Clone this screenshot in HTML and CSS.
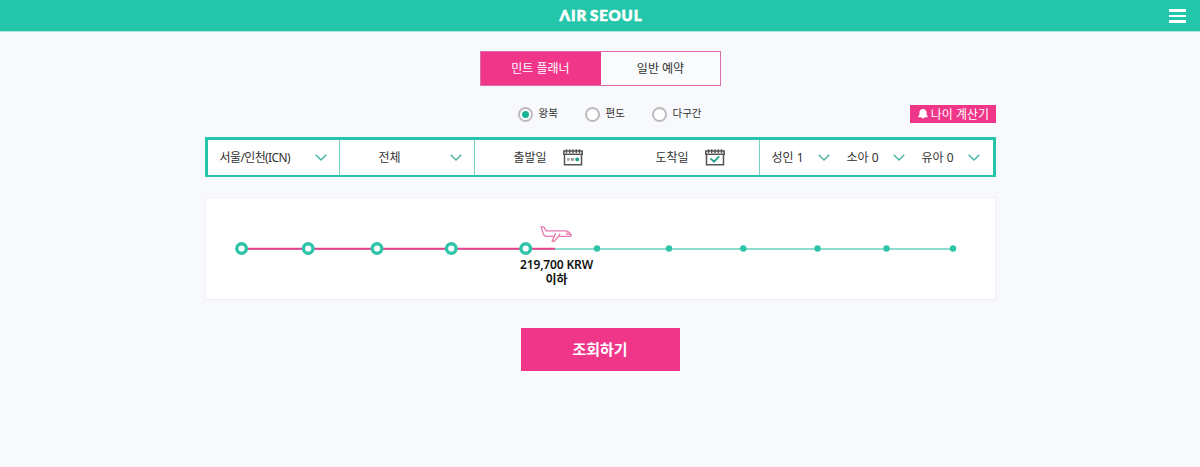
FILE: index.html
```html
<!DOCTYPE html>
<html lang="ko">
<head>
    <meta charset="UTF-8">
    <meta name="viewport" content="width=device-width, initial-scale=1.0">
    <title>AIR SEOUL</title>
    <link rel="stylesheet" href="styles.css">
</head>
<body>
    <header class="header">
        <h1 class="logo" aria-label="AIR SEOUL">ΛIR SEOUL</h1>
        <button type="button" class="menu-btn" aria-label="메뉴"><i></i><i></i><i></i></button>
    </header>

    <main class="container">
        <div class="tabs">
            <a class="tab active">민트 플래너</a>
            <a class="tab">일반 예약</a>
        </div>

        <div class="options">
            <div class="trip-type">
                <label class="radio checked"><i></i><span>왕복</span></label>
                <label class="radio"><i></i><span>편도</span></label>
                <label class="radio"><i></i><span>다구간</span></label>
            </div>
            <button type="button" class="age-btn">
                <svg width="10" height="10" viewBox="0 0 10 10"><path d="M5 0C3 0 1.4 1.5 1.4 3.4V5.6L.3 7.3V8.2H9.7V7.3L8.6 5.6V3.4C8.6 1.5 7 0 5 0ZM3.3 8.2Q5 11 6.7 8.2Z" fill="#fff"/></svg>
                <span>나이 계산기</span>
            </button>
        </div>

        <div class="search-bar">
            <div class="cell depart">
                <span>서울/인천(ICN)</span>
                <svg class="arrow" viewBox="0 0 12 7"><path d="M.7.7 6 6 11.3.7"/></svg>
            </div>
            <div class="cell arrive">
                <span>전체</span>
                <svg class="arrow" viewBox="0 0 12 7"><path d="M.7.7 6 6 11.3.7"/></svg>
            </div>
            <div class="cell dates">
                <div class="date">
                    <span>출발일</span>
                    <svg class="calendar" viewBox="0 0 20 17">
                        <path class="frame" d="M.8 2H19.2V5.3H.8ZM1.5 5.3V15.8H18.5V5.3"/>
                        <path class="rings" d="M3.5 .2V4M6.7 .2V4M10 .2V4M13.3 .2V4M16.5 .2V4"/>
                        <rect x="4" y="9" width="2.8" height="2.8" fill="#aaa"/>
                        <rect x="8" y="9" width="2.8" height="2.8" fill="#999"/>
                        <circle cx="14.2" cy="10.4" r="1.9" fill="#1f9f89"/>
                    </svg>
                </div>
                <div class="date">
                    <span>도착일</span>
                    <svg class="calendar" viewBox="0 0 20 17">
                        <path class="frame" d="M.8 2H19.2V5.3H.8ZM1.5 5.3V15.8H18.5V5.3"/>
                        <path class="rings" d="M3.5 .2V4M6.7 .2V4M10 .2V4M13.3 .2V4M16.5 .2V4"/>
                        <path d="M5.6 9.3 9 12.7 14.2 7.3" fill="none" stroke="#1f9f89" stroke-width="1.8"/>
                    </svg>
                </div>
            </div>
            <div class="cell people">
                <div class="person"><span>성인 1</span><svg class="arrow" viewBox="0 0 12 7"><path d="M.7.7 6 6 11.3.7"/></svg></div>
                <div class="person"><span>소아 0</span><svg class="arrow" viewBox="0 0 12 7"><path d="M.7.7 6 6 11.3.7"/></svg></div>
                <div class="person"><span>유아 0</span><svg class="arrow" viewBox="0 0 12 7"><path d="M.7.7 6 6 11.3.7"/></svg></div>
            </div>
        </div>

        <section class="planner">
            <svg class="track" viewBox="0 0 789 60">
                <path d="M36 51H748" stroke="#8fdccf" stroke-width="2"/>
                <path d="M36 50.7H349" stroke="#e9418c" stroke-width="2"/>
                <g fill="#fff" stroke="#2dc4a8" stroke-width="3.4">
                    <circle cx="35.6" cy="50.5" r="4.8"/>
                    <circle cx="102.2" cy="50.5" r="4.8"/>
                    <circle cx="171" cy="50.5" r="4.8"/>
                    <circle cx="245.3" cy="50.5" r="4.8"/>
                    <circle cx="319.7" cy="50.5" r="4.8"/>
                </g>
                <g fill="#2dc4a8">
                    <circle cx="391" cy="50.5" r="3.2"/>
                    <circle cx="463" cy="50.5" r="3.2"/>
                    <circle cx="537.3" cy="50.5" r="3.2"/>
                    <circle cx="611.6" cy="50.5" r="3.2"/>
                    <circle cx="680.5" cy="50.5" r="3.2"/>
                    <circle cx="747" cy="50.5" r="3.2"/>
                </g>
                <g class="plane" transform="translate(334 28)">
                    <path d="M1.2.8H3.8L6.2 4.9H26Q28.8 5.3 31.4 9.2Q31 10.3 29 10.3H18.6L14.2 15.4H12.2L14.2 10.3H6.5Q4 10 3.3 8Z"/>
                    <path d="M14.2 10.3 15.8 7.2M18.6 10.3 20 7.5M26.8 6.5V8.2H30.3"/>
                </g>
            </svg>
            <div class="price">
                <span>219,700 KRW</span>
                <span>이하</span>
            </div>
        </section>

        <button type="button" class="submit-btn">조회하기</button>
    </main>
</body>
</html>
```

FILE: styles.css
```css
:root {
    --mint: #24c6aa;
    --pink: #ef3689;
}
* {
    box-sizing: border-box;
}
body {
    margin: 0;
    min-height: 467px;
    background: #f8f9fc;
    color: #333;
    font-family: "Noto Sans", "Noto Sans CJK KR", sans-serif;
    font-size: 12px;
}
button {
    border: 0;
    padding: 0;
    font-family: inherit;
    cursor: pointer;
}
svg {
    display: block;
    flex: none;
}
span {
    white-space: nowrap;
}
.header {
    display: grid;
    grid-template-columns: 1fr auto 1fr;
    align-items: center;
    height: 32px;
    padding-right: 14px;
    background: var(--mint);
    border-bottom: 1px solid #a9e7dc;
}
.logo {
    grid-column: 2;
    margin: -1px 0 0 16px;
    color: #fff;
    font: 900 15px/30px Lato, sans-serif;
    letter-spacing: 0.9px;
    word-spacing: -1.5px;
    -webkit-text-stroke: 0.6px #fff;
}
.menu-btn {
    display: flex;
    flex-direction: column;
    justify-self: end;
    gap: 3px;
    width: 17px;
    margin-top: 1px;
    background: none;
}
.menu-btn i {
    height: 2.6px;
    background: #fff;
}
.container {
    width: 791px;
    margin: 0 auto;
}
.tabs {
    display: flex;
    width: 241px;
    height: 35px;
    margin: 19px auto 0;
    border: 1px solid #d86fa8;
    background: #fafbfd;
}
.tab {
    flex: 1;
    padding-left: 1px;
    line-height: 33px;
    text-align: center;
}
.tab.active {
    flex: 0 0 120px;
    padding-left: 0;
    background: var(--pink);
    color: #fff;
}
.options {
    display: flex;
    justify-content: space-between;
    align-items: center;
    height: 18px;
    margin-top: 19px;
    padding-left: 313px;
}
.trip-type {
    display: flex;
    font-size: 10.5px;
    line-height: 14px;
}
.radio {
    display: flex;
    align-items: center;
    gap: 6px;
    width: 67px;
}
.radio span {
    margin-top: -2px;
}
.radio i {
    display: flex;
    align-items: center;
    justify-content: center;
    width: 15px;
    height: 15px;
    border: 2px solid #bbb;
    border-radius: 50%;
    background: #fff;
}
.radio.checked i::after {
    content: "";
    width: 7px;
    height: 7px;
    border-radius: 50%;
    background: #18b294;
}
.age-btn {
    display: flex;
    align-items: center;
    justify-content: center;
    gap: 3px;
    width: 86px;
    height: 18px;
    padding-left: 2px;
    background: var(--pink);
    color: #fff;
    font-size: 12px;
    line-height: 17px;
}
.search-bar {
    display: flex;
    height: 40px;
    margin-top: 14px;
    border: 3px solid var(--mint);
    border-bottom-width: 2.5px;
    background: #fff;
}
.cell {
    display: flex;
    flex: none;
    align-items: center;
    border-right: 1px solid #79d3c5;
}
.cell:last-child {
    border-right: 0;
}
.cell span {
    margin-top: -1px;
}
.arrow {
    width: 12px;
    height: 7px;
    fill: none;
    stroke: #43b5a3;
    stroke-width: 1.4;
}
.depart {
    justify-content: space-between;
    width: 132px;
    padding: 0 12px;
    letter-spacing: -0.6px;
}
.arrive {
    justify-content: space-between;
    width: 135px;
    padding: 0 12px 0 39px;
}
.dates {
    width: 285px;
    padding-left: 39px;
}
.date {
    display: flex;
    flex: none;
    align-items: center;
    gap: 16px;
    width: 142px;
}
.calendar {
    width: 20px;
    height: 17px;
}
.frame {
    fill: #fff;
    stroke: #555;
    stroke-width: 1.5;
}
.rings {
    stroke: #555;
    stroke-width: 1.4;
}
.people {
    width: 233px;
    padding-left: 12px;
}
.person {
    display: flex;
    flex: none;
    align-items: center;
    justify-content: space-between;
    width: 75px;
    padding-right: 17px;
}
.planner {
    height: 103px;
    margin-top: 20px;
    border: 1px solid #f0f0f2;
    background: #fff;
}
.track {
    width: 789px;
    height: 60px;
}
.plane {
    fill: none;
    stroke: #e878ae;
    stroke-width: 1.3;
}
.price {
    display: flex;
    flex-direction: column;
    align-items: center;
    width: 90px;
    margin-left: 306px;
    color: #111;
    font-size: 12px;
    font-weight: 600;
    line-height: 14.5px;
    letter-spacing: -0.15px;
}
.submit-btn {
    display: block;
    width: 159px;
    height: 43px;
    margin: 28px auto 0;
    padding-bottom: 2px;
    background: var(--pink);
    color: #fff;
    font-size: 15px;
    font-weight: 600;
}
```
